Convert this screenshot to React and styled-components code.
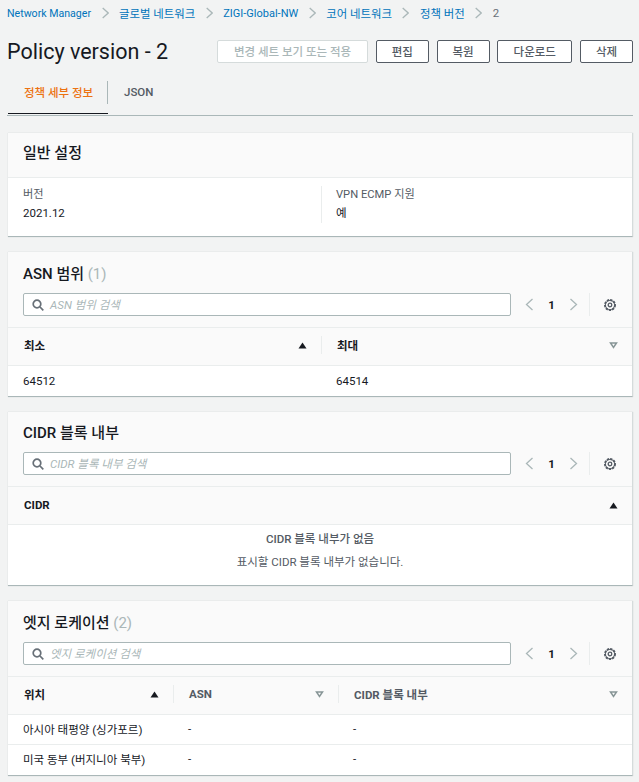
import React from 'react'
import styled, { createGlobalStyle } from 'styled-components'

const GlobalStyle = createGlobalStyle`
  html, body {
    margin: 0;
    padding: 0;
    background: #f2f3f3;
    color: #16191f;
    font-family: Roboto, "Noto Sans CJK KR", sans-serif;
    font-size: 11.5px;
  }
  * { box-sizing: border-box; }
`

const Page = styled.div`
  width: 639px;
  height: 782px;
  overflow: hidden;
  padding: 0 7px 0 7px;
`

const Crumbs = styled.div`
  display: flex;
  align-items: center;
  height: 26px;
`

const Crumb = styled.span`
  font-size: ${(p) => p.$size || 11.4}px;
  color: ${(p) => (p.$current ? '#687078' : '#0073bb')};
`

const CrumbSep = styled.svg`
  flex: none;
  width: 7px;
  height: 12px;
  margin: 0 10.5px;
  fill: none;
  stroke: #aab7b8;
  stroke-width: 1.3;
`

const TitleRow = styled.div`
  display: flex;
  align-items: center;
  justify-content: space-between;
  width: 626px;
  height: 26px;
  margin-top: 12px;
`

const Title = styled.h1`
  margin: 0;
  font-size: 21.5px;
  font-weight: 400;
  color: #16191f;
`

const Actions = styled.div`
  display: flex;
  gap: 7.75px;
`

const Button = styled.div`
  display: flex;
  align-items: center;
  justify-content: center;
  width: ${(p) => p.$w}px;
  height: 23px;
  border: 1px solid ${(p) => (p.$disabled ? '#d5dbdb' : '#545b64')};
  border-radius: 2px;
  background: #ffffff;
  color: ${(p) => (p.$disabled ? '#aab7b8' : '#545b64')};
  font-size: 11.5px;
  font-weight: 500;
`

const Tabs = styled.div`
  display: flex;
  height: 38px;
  margin-top: 14px;
  border-bottom: 1px solid #aab7b8;
  width: 626px;
`

const Tab = styled.div`
  display: flex;
  align-items: center;
  height: 36px;
  padding: 0 15px 8px 16px;
  font-size: 11.5px;
  font-weight: 500;
  color: ${(p) => (p.$active ? '#ec7211' : '#545b64')};
  border-bottom: ${(p) => (p.$active ? '1px solid #16191f' : 'none')};
  margin-left: ${(p) => (p.$active ? '1px' : '0')};
  width: ${(p) => (p.$active ? '100px' : 'auto')};
  white-space: nowrap;
`

const TabSep = styled.div`
  width: 1px;
  height: 23px;
  margin-top: 3px;
  margin-left: -1px;
  background: #aab7b8;
`

const Card = styled.section`
  width: 625px;
  margin: 0 0 15px 1px;
  background: #ffffff;
  border-bottom: 1px solid #aab7b8;
  border-right: 1px solid #d5dbdb;
  box-shadow: 0 0 1px rgba(0, 28, 36, 0.2);
`

const FirstCard = styled(Card)`
  margin-top: 17px;
`

const SimpleHeader = styled.div`
  display: flex;
  align-items: center;
  height: 45px;
  padding: 0 15px 4px;
  background: #fafafa;
  border-bottom: 1px solid #eaeded;
`

const CardTitle = styled.h2`
  margin: 0;
  font-size: 15px;
  line-height: 20px;
  font-weight: 500;
  color: #16191f;
`

const Count = styled.span`
  font-weight: 400;
  color: #aab7b8;
`

const Settings = styled.div`
  display: grid;
  grid-template-columns: 298px 1fr;
  padding: 8px 15px 0;
  height: 58px;
`

const SettingCell = styled.div`
  height: 37px;
  padding-left: ${(p) => (p.$border ? '14px' : '0')};
  border-left: ${(p) => (p.$border ? '1px solid #eaeded' : 'none')};
  line-height: 18px;
`

const SettingLabel = styled.div`
  color: #545b64;
  font-size: 11.2px;
`

const TableHeader = styled.div`
  height: ${(p) => p.$h}px;
  padding: ${(p) => p.$top}px 15px 0;
  background: #fafafa;
  border-bottom: 1px solid #eaeded;
`

const Filter = styled.div`
  display: flex;
  align-items: center;
  margin-top: ${(p) => p.$gap}px;
`

const Search = styled.div`
  flex: none;
  display: flex;
  align-items: center;
  width: 488px;
  height: 23px;
  padding: 0 0 2px 8px;
  background: #ffffff;
  border: 1px solid #aab7b8;
  border-radius: 2px;
  font-style: italic;
  color: #aab7b8;
`

const SearchIcon = styled.svg`
  flex: none;
  width: 12px;
  height: 12px;
  margin: 2px 6px 0 0;
  fill: none;
  stroke: #687078;
  stroke-width: 1.7;
`

const Pager = styled.div`
  display: flex;
  align-items: center;
  margin-left: 14px;
  height: 23px;
  font-weight: 700;
`

const PagerArrow = styled.svg`
  width: 9px;
  height: 13px;
  fill: none;
  stroke: #aab7b8;
  stroke-width: 1.3;
`

const PageNum = styled.span`
  width: 35px;
  text-align: center;
`

const GearWrap = styled.div`
  display: flex;
  align-items: center;
  height: 23px;
  margin-left: 11px;
  padding-left: 13px;
  border-left: 1px solid #eaeded;
`

const Gear = styled.svg`
  width: 14px;
  height: 14px;
  fill: none;
  stroke: #545b64;
`

const Row = styled.div`
  display: grid;
  grid-template-columns: ${(p) => p.$cols};
  align-items: center;
  height: ${(p) => p.$h}px;
  padding-bottom: ${(p) => p.$pb || 0}px;
  border-bottom: ${(p) => (p.$last ? 'none' : '1px solid #eaeded')};
  background: ${(p) => (p.$head ? '#fafafa' : '#ffffff')};
`

const HeadCell = styled.div`
  display: flex;
  align-items: center;
  justify-content: space-between;
  height: 18px;
  padding: 0 14px 0 ${(p) => (p.$border ? 15 : 16)}px;
  font-weight: 700;
  color: ${(p) => (p.$muted ? '#545b64' : '#16191f')};
  border-left: ${(p) => (p.$border ? '1px solid #eaeded' : 'none')};
`

const Cell = styled.div`
  padding-left: 15px;
  color: #16191f;
`

const Sort = styled.svg`
  flex: none;
  width: 9px;
  height: 7px;
`

const Empty = styled.div`
  height: 60px;
  padding-top: 3px;
  text-align: center;
  line-height: 23px;
  color: #545b64;
`

const EmptyTitle = styled.div`
  font-weight: 500;
`

const SortIcon = ({ active }) => (
  <Sort viewBox="0 0 9 7">
    {active ? (
      <path d="M4.5 0.5 L8.5 6.5 H0.5 Z" fill="#16191f" />
    ) : (
      <path d="M1.5 1 H7.5 L4.5 5.5 Z" fill="none" stroke="#879596" strokeWidth="1.5" />
    )}
  </Sort>
)

const Chevron = () => (
  <CrumbSep viewBox="0 0 7 12">
    <path d="M0.7 1 L6.2 6 L0.7 11" />
  </CrumbSep>
)

const TableFilter = ({ placeholder, gap }) => (
  <Filter $gap={gap}>
    <Search>
      <SearchIcon viewBox="0 0 12 12">
        <circle cx="5" cy="5" r="3.8" />
        <path d="M8 8 L11.3 11.3" />
      </SearchIcon>
      {placeholder}
    </Search>
    <Pager>
      <PagerArrow viewBox="0 0 9 13">
        <path d="M7.5 1 L1.5 6.5 L7.5 12" />
      </PagerArrow>
      <PageNum>1</PageNum>
      <PagerArrow viewBox="0 0 9 13">
        <path d="M1.5 1 L7.5 6.5 L1.5 12" />
      </PagerArrow>
    </Pager>
    <GearWrap>
      <Gear viewBox="0 0 14 14">
        <circle cx="7" cy="7" r="5" strokeWidth="2" strokeDasharray="2.2 1.1" />
        <circle cx="7" cy="7" r="4.7" strokeWidth="1" />
        <circle cx="7" cy="7" r="1.8" strokeWidth="1.3" />
      </Gear>
    </GearWrap>
  </Filter>
)

const crumbs = [
  { label: 'Network Manager', size: 10.6 },
  { label: '글로벌 네트워크' },
  { label: 'ZIGI-Global-NW', size: 11 },
  { label: '코어 네트워크' },
  { label: '정책 버전' },
]

const App = () => {
  const edgeCols = '165px 165px 1fr'

  return (
    <Page>
      <GlobalStyle />
      <Crumbs>
        {crumbs.map((c) => (
          <React.Fragment key={c.label}>
            <Crumb $size={c.size}>{c.label}</Crumb>
            <Chevron />
          </React.Fragment>
        ))}
        <Crumb $current>2</Crumb>
      </Crumbs>

      <TitleRow>
        <Title>Policy version - 2</Title>
        <Actions>
          <Button $w={151} $disabled>변경 세트 보기 또는 적용</Button>
          <Button $w={53}>편집</Button>
          <Button $w={53}>복원</Button>
          <Button $w={75}>다운로드</Button>
          <Button $w={53}>삭제</Button>
        </Actions>
      </TitleRow>

      <Tabs>
        <Tab $active>정책 세부 정보</Tab>
        <TabSep />
        <Tab>JSON</Tab>
      </Tabs>

      <FirstCard>
        <SimpleHeader>
          <CardTitle>일반 설정</CardTitle>
        </SimpleHeader>
        <Settings>
          <SettingCell>
            <SettingLabel>버전</SettingLabel>
            2021.12
          </SettingCell>
          <SettingCell $border>
            <SettingLabel>VPN ECMP 지원</SettingLabel>
            예
          </SettingCell>
        </Settings>
      </FirstCard>

      <Card>
        <TableHeader $h={76} $top={12}>
          <CardTitle>ASN 범위 <Count>(1)</Count></CardTitle>
          <TableFilter placeholder="ASN 범위 검색" gap={9} />
        </TableHeader>
        <Row $head $pb={3} $h={38} $cols="313px 1fr">
          <HeadCell>최소<SortIcon active /></HeadCell>
          <HeadCell $border>최대<SortIcon /></HeadCell>
        </Row>
        <Row $last $h={30} $cols="313px 1fr">
          <Cell>64512</Cell>
          <Cell>64514</Cell>
        </Row>
      </Card>

      <Card>
        <TableHeader $h={75} $top={11}>
          <CardTitle>CIDR 블록 내부</CardTitle>
          <TableFilter placeholder="CIDR 블록 내부 검색" gap={9} />
        </TableHeader>
        <Row $head $pb={1} $h={38} $cols="1fr">
          <HeadCell>CIDR<SortIcon active /></HeadCell>
        </Row>
        <Empty>
          <EmptyTitle>CIDR 블록 내부가 없음</EmptyTitle>
          표시할 CIDR 블록 내부가 없습니다.
        </Empty>
      </Card>

      <Card>
        <TableHeader $h={76} $top={12}>
          <CardTitle>엣지 로케이션 <Count>(2)</Count></CardTitle>
          <TableFilter placeholder="엣지 로케이션 검색" gap={9} />
        </TableHeader>
        <Row $head $pb={3} $h={38} $cols={edgeCols}>
          <HeadCell>위치<SortIcon active /></HeadCell>
          <HeadCell $border $muted>ASN<SortIcon /></HeadCell>
          <HeadCell $border $muted>CIDR 블록 내부<SortIcon /></HeadCell>
        </Row>
        <Row $pb={2} $h={30} $cols={edgeCols}>
          <Cell>아시아 태평양 (싱가포르)</Cell>
          <Cell>-</Cell>
          <Cell>-</Cell>
        </Row>
        <Row $last $pb={2} $h={30} $cols={edgeCols}>
          <Cell>미국 동부 (버지니아 북부)</Cell>
          <Cell>-</Cell>
          <Cell>-</Cell>
        </Row>
      </Card>
    </Page>
  )
}

export default App
